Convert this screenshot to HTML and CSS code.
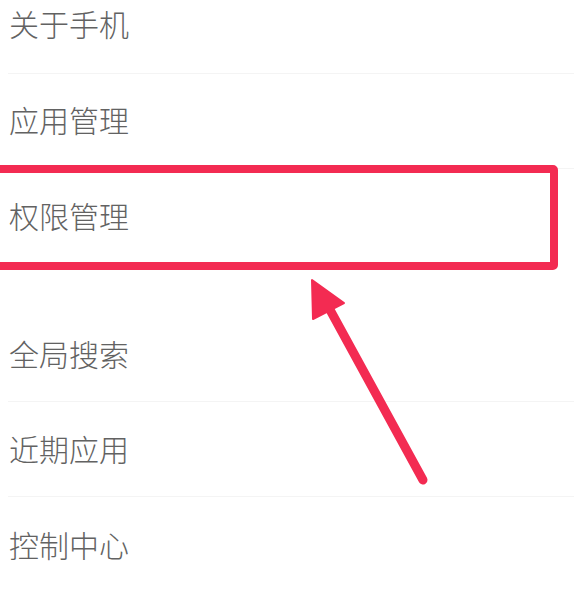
FILE: index.html
```html
<!DOCTYPE html>
<html lang="zh-CN">
<head>
<meta charset="utf-8">
<title>设置</title>
<link rel="stylesheet" href="styles.css">
</head>
<body>
<div class="page">
  <ul class="list">
    <li class="row r1"><span class="label">关于手机</span></li>
    <li class="row r2"><span class="label">应用管理</span></li>
    <li class="row r3"><span class="label">权限管理</span></li>
  </ul>
  <ul class="list section">
    <li class="row r4"><span class="label">全局搜索</span></li>
    <li class="row r5"><span class="label">近期应用</span></li>
    <li class="row r6"><span class="label">控制中心</span></li>
  </ul>
  <div class="highlight"></div>
  <svg class="arrow" width="574" height="589" viewBox="0 0 574 589">
    <line x1="329" y1="308" x2="423" y2="480" stroke="#f32b52" stroke-width="9" stroke-linecap="round"/>
    <polygon points="312,280 313,319 344,303" fill="#f32b52" stroke="#f32b52" stroke-width="2" stroke-linejoin="round"/>
  </svg>
</div>
</body>
</html>
```

FILE: styles.css
```css
html, body {
  margin: 0;
  padding: 0;
  background: #ffffff;
}
.page {
  position: relative;
  width: 574px;
  height: 589px;
  overflow: hidden;
  font-family: "Noto Sans CJK SC", "Noto Sans", sans-serif;
}
.list {
  list-style: none;
  margin: 0;
  padding: 0 0 0 8px;
}
.section {
  margin-top: 44px;
}
.row {
  border-bottom: 1px solid #f4f4f4;
}
.row:last-child {
  border-bottom: none;
}
.label {
  display: block;
  font-size: 30px;
  line-height: 40px;
  font-weight: 300;
  color: #626262;
  margin-left: 1px;
}
.r1 { padding: 3px 0 30px; }
.r2 { padding: 25px 0 29px; }
.r3 { padding: 26px 0 30px; }
.r4 { padding: 24px 0 28px; }
.r5 { padding: 26px 0 28px; }
.r6 { padding: 27px 0 22px; }
.highlight {
  position: absolute;
  left: -12px;
  top: 165px;
  width: 554px;
  height: 89px;
  border: 8px solid #f32b52;
  border-radius: 5px;
}
.arrow {
  position: absolute;
  left: 0;
  top: 0;
}
```
